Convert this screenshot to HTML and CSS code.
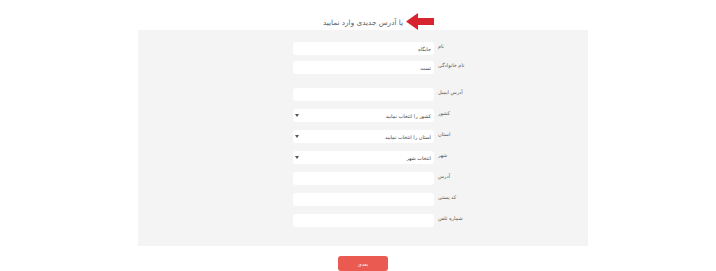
FILE: index.html
```html
<!DOCTYPE html>
<html lang="fa">
<head>
  <meta charset="UTF-8" />
  <meta name="viewport" content="width=device-width, initial-scale=1" />
  <title>آدرس جدید</title>
  <link rel="stylesheet" href="styles.css">
</head>
<body>
<div class="page">
  <div class="header">
    <h1 class="title">یا آدرس جدیدی وارد نمایید
      <svg class="arrow" width="28" height="17" viewBox="0 0 28 17">
        <polygon points="0,8.5 12,0 12,5 28,5 28,12 12,12 12,17" fill="#d7242f" />
      </svg>
    </h1>
  </div>

  <div class="panel">
    <form id="addressForm">
      <div class="row">
        <input type="text" id="firstName" value="جایگاه" />
        <label for="firstName">نام</label>
      </div>
      <div class="row">
        <input type="text" id="lastName" value="تست" />
        <label for="lastName">نام خانوادگی</label>
      </div>
      <div class="row row-gap">
        <input type="email" id="email" />
        <label for="email">آدرس ایمیل</label>
      </div>
      <div class="row">
        <select id="country">
          <option>کشور را انتخاب نمایید</option>
        </select>
        <label for="country">کشور</label>
      </div>
      <div class="row">
        <select id="province">
          <option>استان را انتخاب نمایید</option>
        </select>
        <label for="province">استان</label>
      </div>
      <div class="row">
        <select id="city">
          <option>انتخاب شهر</option>
        </select>
        <label for="city">شهر</label>
      </div>
      <div class="row">
        <input type="text" id="address" />
        <label for="address">آدرس</label>
      </div>
      <div class="row">
        <input type="text" id="postalCode" />
        <label for="postalCode">کد پستی</label>
      </div>
      <div class="row">
        <input type="text" id="phone" />
        <label for="phone">شماره تلفن</label>
      </div>
    </form>
  </div>

  <div class="actions">
    <button type="submit" form="addressForm" class="next-button">بعدی</button>
  </div>
</div>
</body>
</html>
```

FILE: styles.css
```css
:root {
  --panel-grey: #f4f4f4;
  --brand-red: #ea5a50;
  --text-dark: #555;
}

body {
  margin: 0;
  background: #fff;
  font-family: "DejaVu Sans", "Noto Sans", sans-serif;
  color: var(--text-dark);
}

.page {
  width: 460px;
  margin: 0 auto;
  padding-left: 10px;
  box-sizing: border-box;
}

.header {
  height: 30px;
  box-sizing: border-box;
  padding-top: 10px;
  text-align: center;
}

.title {
  position: relative;
  display: inline-block;
  margin: 0;
  font-size: 7.3px;
  font-weight: normal;
  line-height: 12px;
  direction: rtl;
  color: #606060;
}

.arrow {
  position: absolute;
  left: calc(100% + 3px);
  top: -4px;
}

.panel {
  width: 450px;
  background: var(--panel-grey);
  padding: 12px 0 19px;
  box-sizing: border-box;
}

form {
  display: flex;
  flex-direction: column;
  gap: 8px;
}

.row {
  display: grid;
  grid-template-columns: 155px 141px 1fr;
  align-items: start;
}

.row:nth-child(2) {
  margin-top: -2px;
}

.row-gap {
  margin-top: 6px;
}

.row input,
.row select {
  grid-column: 2;
  height: 13px;
  border: none;
  border-radius: 3px;
  background: #fff;
  padding: 0 3px;
  box-sizing: border-box;
  direction: rtl;
  font-family: inherit;
  font-size: 5px;
  color: #444;
  outline: none;
}

.row select {
  appearance: none;
  -webkit-appearance: none;
  background: #fff url("data:image/svg+xml;utf8,<svg xmlns='http://www.w3.org/2000/svg' width='4' height='3' viewBox='0 0 4 3'><polygon points='0,0 4,0 2,3' fill='%23555'/></svg>") no-repeat 2px center;
}

.row label {
  grid-column: 3;
  padding: 0 0 0 4px;
  font-size: 5px;
  line-height: 8px;
  color: #555;
  direction: rtl;
  text-align: left;
}

.actions {
  display: flex;
  justify-content: center;
  width: 450px;
  padding-top: 10px;
}

.next-button {
  width: 50px;
  height: 15px;
  background-color: var(--brand-red);
  color: #fff;
  border: none;
  border-radius: 3px;
  font-family: inherit;
  font-size: 5px;
  cursor: pointer;
}

.next-button:hover {
  background-color: #d94a40;
}
```
